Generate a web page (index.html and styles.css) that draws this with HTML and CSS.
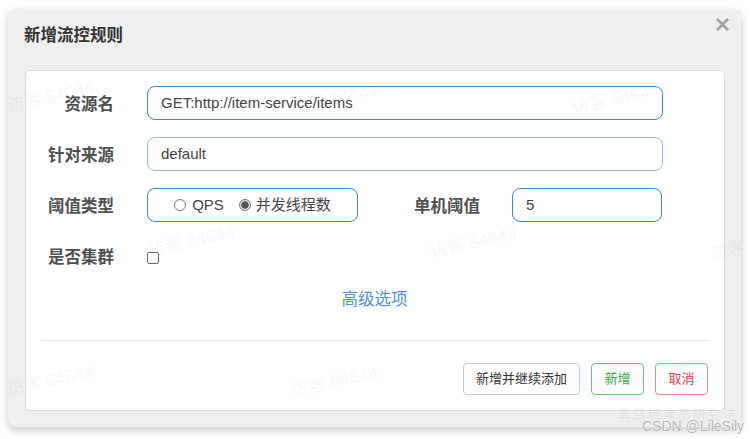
FILE: index.html
```html
<!DOCTYPE html>
<html lang="zh-CN">
<head>
<meta charset="utf-8">
<title>新增流控规则</title>
<link rel="stylesheet" href="styles.css">
</head>
<body>
<div class="dialog">
  <div class="header">
    <div class="title">新增流控规则</div>
    <svg class="close" width="15" height="15" viewBox="0 0 15 15"><path d="M2 2 L13 13 M13 2 L2 13" stroke="#a3a3a3" stroke-width="2.8" stroke-linecap="butt"/></svg>
  </div>
  <div class="panel">
    <div class="row">
      <div class="lbl">资源名</div>
      <div class="input wide">GET:http://item-service/items</div>
    </div>
    <div class="row">
      <div class="lbl">针对来源</div>
      <div class="input wide light">default</div>
    </div>
    <div class="row">
      <div class="lbl">阈值类型</div>
      <div class="radios">
        <span class="radio"></span><span class="rtext">QPS</span>
        <span class="radio on"></span><span class="rtext">并发线程数</span>
      </div>
      <div class="lbl2">单机阈值</div>
      <div class="input small">5</div>
    </div>
    <div class="row last">
      <div class="lbl">是否集群</div>
      <span class="check"></span>
    </div>
    <div class="adv">高级选项</div>
    <div class="divider"></div>
    <div class="buttons">
      <div class="btn">新增并继续添加</div>
      <div class="btn ok">新增</div>
      <div class="btn cancel">取消</div>
    </div>
  </div>
</div>
<div class="watermarks">
  <span class="wm" style="left:5px;top:96px">访客 64644</span>
  <span class="wm" style="left:289px;top:98px">访客 64644</span>
  <span class="wm" style="left:570px;top:98px">访客 64644</span>
  <span class="wm" style="left:146px;top:240px">访客 64644</span>
  <span class="wm" style="left:428px;top:242px">访客 64644</span>
  <span class="wm" style="left:709px;top:244px">访客</span>
  <span class="wm" style="left:5px;top:380px">访客 64644</span>
  <span class="wm" style="left:289px;top:381px">访客 64644</span>
  <span class="wm" style="left:572px;top:383px">访客 64644</span>
  <span class="mark-cn">黑马程序员研究院</span>
  <span class="mark-csdn">CSDN @LileSily</span>
</div>
</body>
</html>
```
FILE: styles.css
```css
html, body {
  margin: 0;
  padding: 0;
}
body {
  width: 750px;
  height: 439px;
  overflow: hidden;
  background: #ffffff;
  position: relative;
  font-family: "Liberation Sans", "Noto Sans CJK SC", sans-serif;
  color: #333;
}
.dialog {
  margin: 9px 0 0 8px;
  width: 733px;
  height: 418px;
  box-sizing: border-box;
  background: #efefef;
  border-radius: 8px;
  box-shadow: 0 3px 9px rgba(0, 0, 0, 0.22);
  display: flex;
  flex-direction: column;
}
.header {
  height: 61px;
  flex: none;
  display: flex;
  justify-content: space-between;
  align-items: flex-start;
  padding: 8px 11px 0 16px;
  box-sizing: border-box;
}
.title {
  margin-top: 8px;
  font-size: 16.5px;
  line-height: 20px;
  font-weight: bold;
  color: #333;
}
.close {
  display: block;
}
.panel {
  margin: 0 16px 17px 17px;
  height: 341px;
  box-sizing: border-box;
  background: #fff;
  border: 1px solid #dcdcdc;
  border-radius: 5px;
  padding: 15px 16px 15px 15px;
  display: flex;
  flex-direction: column;
}
.row {
  display: flex;
  align-items: center;
  height: 34px;
  margin-bottom: 17px;
}
.row.last {
  margin-bottom: 0;
}
.lbl {
  width: 73px;
  margin-right: 33px;
  text-align: right;
  font-size: 16.5px;
  font-weight: bold;
  color: #4f4f4f;
  white-space: nowrap;
}
.lbl2 {
  margin-left: 56px;
  margin-right: 32px;
  font-size: 16.5px;
  font-weight: bold;
  color: #4f4f4f;
  white-space: nowrap;
}
.input {
  height: 34px;
  box-sizing: border-box;
  border: 1px solid #4187c8;
  border-radius: 8px;
  padding: 0 13px;
  font-size: 15px;
  line-height: 32px;
  color: #444;
  background: #fff;
}
.input.wide {
  width: 516px;
}
.input.light {
  border-color: #93b8dc;
}
.input.small {
  width: 150px;
}
.radios {
  width: 211px;
  height: 34px;
  box-sizing: border-box;
  border: 1px solid #4187c8;
  border-radius: 8px;
  display: flex;
  align-items: center;
  justify-content: center;
  font-size: 15px;
  color: #444;
}
.radio {
  width: 12px;
  height: 12px;
  box-sizing: border-box;
  border: 1px solid #7a7a7a;
  border-radius: 50%;
  background: #fff;
  margin-right: 6px;
}
.radio.on {
  margin-left: 15px;
  margin-right: 5px;
  background: radial-gradient(circle, #555 0, #555 3.4px, #e3e3e3 4px, #e3e3e3 100%);
}
.rtext {
  line-height: 20px;
}
.check {
  width: 12px;
  height: 12px;
  box-sizing: border-box;
  border: 1px solid #6a6a6a;
  border-radius: 2px;
  background: #fff;
  margin-top: 3px;
}
.adv {
  margin-top: 16px;
  line-height: 20px;
  text-align: center;
  font-size: 16.5px;
  color: #4f94d8;
}
.divider {
  margin-top: 31px;
  border-top: 1px solid #e5e5e5;
}
.buttons {
  margin-top: 22px;
  display: flex;
  justify-content: flex-end;
  gap: 11px;
}
.btn {
  height: 32px;
  box-sizing: border-box;
  padding: 0 12px;
  border: 1px solid #cccccc;
  border-radius: 4px;
  font-size: 13px;
  line-height: 30px;
  color: #333;
  background: #fff;
  text-align: center;
}
.btn.ok {
  width: 53px;
  border-color: #6cc47c;
  color: #3da94e;
}
.btn.cancel {
  width: 53px;
  border-color: #ea8990;
  color: #e2414c;
}
.watermarks {
  position: absolute;
  left: 0;
  top: 0;
  width: 750px;
  height: 439px;
  pointer-events: none;
}
.wm {
  position: absolute;
  font-size: 17.5px;
  line-height: 20px;
  color: rgba(0, 0, 0, 0.05);
  white-space: nowrap;
  transform: rotate(-12deg);
  transform-origin: 0 0;
}
.mark-cn {
  position: absolute;
  left: 617px;
  top: 407px;
  font-size: 14px;
  line-height: 16px;
  color: rgba(0, 0, 0, 0.07);
  letter-spacing: 1px;
  white-space: nowrap;
}
.mark-csdn {
  position: absolute;
  left: 642px;
  top: 418px;
  font-size: 14px;
  line-height: 16px;
  color: #b5b5b5;
  white-space: nowrap;
  text-shadow: 0 0 1px #fff, 0 0 1px #fff;
}
```
